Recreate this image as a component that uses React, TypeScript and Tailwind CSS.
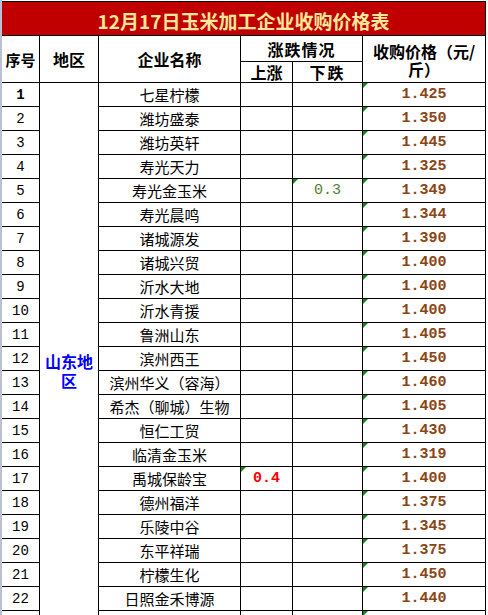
import React from "react";

const rows = [
  { no: "1", name: "七星柠檬", price: "1.425", bold: true },
  { no: "2", name: "潍坊盛泰", price: "1.350" },
  { no: "3", name: "潍坊英轩", price: "1.445" },
  { no: "4", name: "寿光天力", price: "1.325" },
  { no: "5", name: "寿光金玉米", price: "1.349", down: "0.3" },
  { no: "6", name: "寿光晨鸣", price: "1.344" },
  { no: "7", name: "诸城源发", price: "1.390" },
  { no: "8", name: "诸城兴贸", price: "1.400" },
  { no: "9", name: "沂水大地", price: "1.400" },
  { no: "10", name: "沂水青援", price: "1.400" },
  { no: "11", name: "鲁洲山东", price: "1.405" },
  { no: "12", name: "滨州西王", price: "1.450" },
  { no: "13", name: "滨州华义（容海）", price: "1.460" },
  { no: "14", name: "希杰（聊城）生物", price: "1.405" },
  { no: "15", name: "恒仁工贸", price: "1.430" },
  { no: "16", name: "临清金玉米", price: "1.319" },
  { no: "17", name: "禹城保龄宝", price: "1.400", up: "0.4" },
  { no: "18", name: "德州福洋", price: "1.375" },
  { no: "19", name: "乐陵中谷", price: "1.345" },
  { no: "20", name: "东平祥瑞", price: "1.375" },
  { no: "21", name: "柠檬生化", price: "1.450" },
  { no: "22", name: "日照金禾博源", price: "1.440" },
  // rows below the fold, only their grid lines peek in
  { no: "", name: "", price: "" },
  { no: "", name: "", price: "" },
];

const cjk = "font-['Noto_Sans_CJK_SC',sans-serif]";
const mono = "font-['Liberation_Mono','Noto_Sans_CJK_SC',monospace]";

// the little green "number stored as text" flag Excel draws
const Flag = () => (
  <span className="absolute top-0 left-0 w-0 h-0 border-t-[5px] border-r-[5px] border-t-[#0b8a12] border-r-transparent" />
);

export default function App() {
  return (
    <div className="h-[615px] w-[488px] overflow-hidden bg-white flex">
      <div className="w-[2px] shrink-0 bg-[#b9c2d3]" />
      <div className="pt-[1px]">
        <div
          className={`grid grid-cols-[37px_58px_141px_51px_69px_122px] grid-rows-[33px_25px_20px] auto-rows-[23px] gap-[1px] bg-black border-t border-r border-black ${cjk}`}
        >
          <div className="col-span-6 bg-[#c00000] flex items-center justify-center pt-[3px] text-[19px] font-bold text-[#ffe699] leading-none">
            12月17日玉米加工企业收购价格表
          </div>

          <div className="row-span-2 bg-white flex items-center justify-center text-[15px] font-bold leading-none">
            序号
          </div>
          <div className="row-span-2 bg-white flex items-center justify-center text-[16px] font-bold leading-none">
            地区
          </div>
          <div className="row-span-2 bg-white flex items-center justify-center text-[16px] font-bold leading-none">
            企业名称
          </div>
          <div className="col-span-2 bg-white flex items-center justify-center text-[16px] font-bold leading-none tracking-[1px]">
            涨跌情况
          </div>
          <div className="row-span-2 bg-white flex flex-col items-center justify-center text-[16px] font-bold leading-none gap-[2px] pt-[1px]">
            <span>收购价格（元/</span>
            <span>斤）</span>
          </div>
          <div className="bg-white flex items-center justify-center text-[16px] font-bold leading-none">
            上涨
          </div>
          <div className="bg-white flex items-center justify-center text-[16px] font-bold leading-none tracking-[2px]">
            下跌
          </div>

          {rows.map((r, i) => (
            <React.Fragment key={i}>
              <div
                className={`bg-white flex items-center justify-center text-[14px] leading-none ${mono} ${
                  r.bold ? "font-bold" : ""
                }`}
              >
                {r.no}
              </div>
              {i === 0 && (
                <div className="row-[span_24/span_24] bg-white flex items-center justify-center text-center px-[4px] text-[16px] font-bold leading-[18.5px] text-[#0000ff]">
                  山东地区
                </div>
              )}
              <div className="bg-white flex items-center justify-center text-[15px] leading-none whitespace-nowrap">
                {r.name}
              </div>
              <div
                className={`relative bg-white flex items-center justify-center text-[15px] font-bold leading-none text-[#ff0000] ${mono}`}
              >
                {r.up && <Flag />}
                {r.up}
              </div>
              <div
                className={`relative bg-white flex items-center justify-center text-[15px] leading-none text-[#4f7f2f] ${mono}`}
              >
                {r.down && <Flag />}
                {r.down}
              </div>
              <div
                className={`relative bg-white flex items-center justify-center text-[15px] font-bold leading-none text-[#8b4513] ${mono}`}
              >
                <Flag />
                {r.price}
              </div>
            </React.Fragment>
          ))}
        </div>
      </div>
    </div>
  );
}
